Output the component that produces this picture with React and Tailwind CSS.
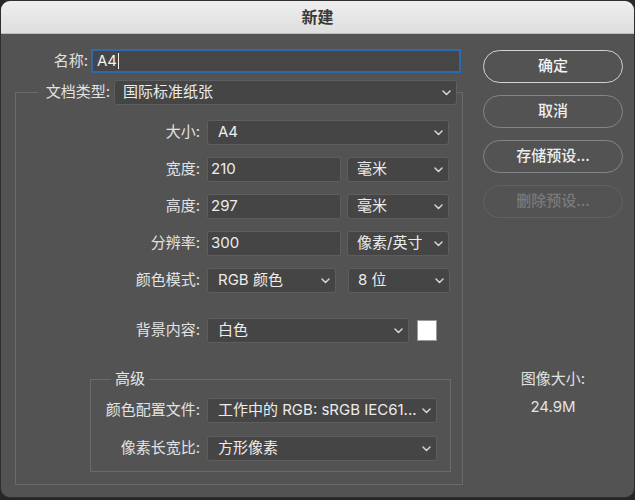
const font = { fontFamily: 'Inter, "Noto Sans CJK SC", sans-serif' };

function Chevron() {
  return (
    <svg width="9" height="6" viewBox="0 0 9 6" className="shrink-0">
      <polyline points="1,1 4.5,4.5 8,1" fill="none" stroke="#d4d4d4" strokeWidth="1.5" strokeLinecap="round" strokeLinejoin="round" />
    </svg>
  );
}

function Select({ text, className = '', pad = 'pl-[10px]' }) {
  return (
    <div className={`flex items-center justify-between h-[25px] rounded-[3px] bg-[#454545] border border-[#5e5e5e] ${pad} pr-[5px] text-[15px] text-[#ececec] whitespace-nowrap overflow-hidden ${className}`}>
      <span className="overflow-hidden">{text}</span>
      <Chevron />
    </div>
  );
}

function Field({ text, className = '' }) {
  return (
    <div className={`flex items-center h-[25px] rounded-[2px] bg-[#454545] border border-[#5e5e5e] pl-[3px] text-[15px] text-[#ececec] ${className}`}>
      {text}
    </div>
  );
}

function Row({ label, labelW = 'w-[184px]', children }) {
  return (
    <div className="flex items-center h-[25px]">
      <div className={`${labelW} text-right text-[15px] text-[#e2e2e2] whitespace-nowrap`}>{label}</div>
      <div className="flex items-center ml-[7px]">{children}</div>
    </div>
  );
}

function Button({ children, variant = 'normal' }) {
  const styles = {
    primary: 'border-[1.5px] border-[#d2d2d2] text-[#f2f2f2]',
    normal: 'border-[1.5px] border-[#858585] text-[#eeeeee]',
    disabled: 'border-[1.5px] border-[#626262] text-[#7a7a7a]',
  };
  return (
    <div className={`flex items-center justify-center h-[33px] w-[140px] rounded-full text-[15px] font-medium ${styles[variant]}`}>
      {children}
    </div>
  );
}

export default function App() {
  return (
    <div className="w-[635px] h-[500px] bg-[#262626]" style={font}>
      <div className="w-[635px] h-[498px] rounded-[10px] overflow-hidden bg-[#535353] border border-[#2e2e2e] flex flex-col">
        <div className="h-[33px] shrink-0 flex items-center justify-center bg-gradient-to-b from-[#eeeeee] to-[#dedede] border-b border-[#bdbdbd]">
          <span className="text-[16px] font-semibold text-[#3a3a3a]">新建</span>
        </div>

        <div className="flex">
          {/* left column */}
          <div className="pl-[14px] pt-[15px] w-[463px]">
            <div className="flex items-center h-[24px]">
              <div className="w-[73px] text-right text-[15px] text-[#e2e2e2]">名称:</div>
              <div className="ml-[3px] w-[370px] h-[24px] flex items-center bg-[#464646] border-2 border-[#2f68ad] pl-[4px] text-[15px] text-[#f0f0f0]">
                A4<span className="w-px h-[16px] bg-[#f0f0f0] ml-px" />
              </div>
            </div>

            <fieldset className="mt-[7px] w-[448px] border border-[#6a6a6a] pb-[12px]">
              <legend className="ml-[22px]">
                <div className="flex items-center gap-[4px]">
                  <div className="w-[72px] text-right text-[15px] text-[#e2e2e2] whitespace-nowrap">文档类型:</div>
                  <Select text="国际标准纸张" className="w-[343px]" pad="pl-[8px]" />
                </div>
              </legend>

              <div className="flex flex-col gap-[12px] pt-[15px]">
                <Row label="大小:">
                  <Select text="A4" className="w-[242px]" />
                </Row>
                <Row label="宽度:">
                  <Field text="210" className="w-[134px]" />
                  <Select text="毫米" className="w-[102px] ml-[6px]" pad="pl-[9px]" />
                </Row>
                <Row label="高度:">
                  <Field text="297" className="w-[134px]" />
                  <Select text="毫米" className="w-[102px] ml-[6px]" pad="pl-[9px]" />
                </Row>
                <Row label="分辨率:">
                  <Field text="300" className="w-[134px]" />
                  <Select text="像素/英寸" className="w-[102px] ml-[6px]" pad="pl-[9px]" />
                </Row>
                <Row label="颜色模式:">
                  <Select text="RGB 颜色" className="w-[129px]" />
                  <Select text="8 位" className="w-[102px] ml-[12px]" pad="pl-[9px]" />
                </Row>
                <div className="mt-[13px]">
                  <Row label="背景内容:">
                    <Select text="白色" className="w-[202px]" />
                    <div className="ml-[8px] w-[20px] h-[21px] bg-white border border-[#9a9a9a]" />
                  </Row>
                </div>

                <fieldset className="mt-[14px] ml-[74px] w-[361px] border border-[#6a6a6a] pb-[10px]">
                  <legend className="ml-[20px] px-[4px] text-[15px] leading-[20px] text-[#e8e8e8]">高级</legend>
                  <div className="flex flex-col gap-[13px] pt-[9px]">
                    <Row label="颜色配置文件:" labelW="w-[109px]">
                      <Select text="工作中的 RGB: sRGB IEC61..." className="w-[230px]" />
                    </Row>
                    <Row label="像素长宽比:" labelW="w-[109px]">
                      <Select text="方形像素" className="w-[230px]" />
                    </Row>
                  </div>
                </fieldset>
              </div>
            </fieldset>
          </div>

          {/* right column */}
          <div className="ml-[19px] pt-[16px] w-[140px] flex flex-col gap-[12px]">
            <Button variant="primary">确定</Button>
            <Button>取消</Button>
            <Button>存储预设...</Button>
            <Button variant="disabled">删除预设...</Button>
            <div className="mt-[139px] flex flex-col items-center text-[15px] leading-[20px] text-[#e2e2e2]">
              <div>图像大小:</div>
              <div className="mt-[8px]">24.9M</div>
            </div>
          </div>
        </div>
      </div>
    </div>
  );
}
